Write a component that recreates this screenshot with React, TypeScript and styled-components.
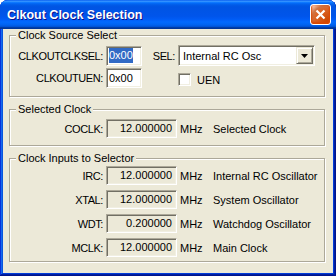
import { Fragment } from "react";
import styled, { createGlobalStyle } from "styled-components";

const GlobalStyle = createGlobalStyle`
  html, body {
    margin: 0;
    padding: 0;
    background: #fff;
  }
  body {
    font-family: "Liberation Sans", Arial, sans-serif;
    font-size: 11px;
    color: #000;
  }
`;

const Window = styled.div`
  width: 336px;
  height: 276px;
  box-sizing: border-box;
  display: flex;
  flex-direction: column;
  background: #0842d4;
  border-radius: 8px 8px 0 0;
  overflow: hidden;
  box-shadow: inset -1px -1px #00138c, inset 1px 1px #0831d9, inset -2px -2px #001ea0,
    inset 2px 2px #166aee, inset -3px -3px #003bda, inset 3px 3px #0855dd;
`;

const TitleBar = styled.div`
  height: 29px;
  flex: none;
  display: flex;
  align-items: center;
  justify-content: space-between;
  padding: 0 5px 0 7px;
  background: linear-gradient(
    to bottom,
    #0058ee 0%,
    #3a93ff 4%,
    #288eff 6%,
    #127dff 8%,
    #036ffc 10%,
    #0262ee 14%,
    #0057e5 20%,
    #0054e3 24%,
    #0055eb 56%,
    #005bf5 66%,
    #026afe 76%,
    #0062ef 86%,
    #0052d6 92%,
    #0040ab 94%,
    #003092 100%
  );
`;

const Title = styled.span`
  color: #fff;
  font-weight: bold;
  font-size: 12.5px;
  text-shadow: 1px 1px #0f1089;
`;

const CloseButton = styled.div`
  width: 21px;
  height: 21px;
  box-sizing: border-box;
  border: 1px solid #fff;
  border-radius: 3px;
  display: flex;
  align-items: center;
  justify-content: center;
  background: radial-gradient(circle at 85% 85%, #cc4600 0%, #dc6527 55%, #cd7546 70%, #ffccb2 90%, #fff 100%);
  box-shadow: inset 0 -1px 2px 1px #da4600;
`;

const Frame = styled.div`
  flex: 1;
  display: flex;
  padding: 0 3px 3px;
`;

const Client = styled.div`
  flex: 1;
  background: #ece9d8;
  padding: 6px 8px 10px 6px;
  display: flex;
  flex-direction: column;
  gap: 12px;
`;

const Group = styled.div<{ $pad: string }>`
  position: relative;
  border: 1px solid #aca899;
  box-shadow: 1px 1px 0 #fff, inset 1px 1px 0 #fff;
  padding: ${(p) => p.$pad};
`;

const Legend = styled.span`
  position: absolute;
  top: -7px;
  left: 6px;
  padding: 0 2px;
  line-height: 13px;
  background: #ece9d8;
`;

const Grid = styled.div<{ $cols: string; $rows: string; $gap: number }>`
  display: grid;
  grid-template-columns: ${(p) => p.$cols};
  grid-template-rows: ${(p) => p.$rows};
  column-gap: 3px;
  row-gap: ${(p) => p.$gap}px;
  align-items: center;
`;

const Label = styled.span`
  text-align: right;
  white-space: nowrap;
  letter-spacing: -0.4px;
`;

const Sunken = styled.div`
  box-sizing: border-box;
  border: 1px solid;
  border-color: #aca899 #fff #fff #aca899;
  box-shadow: inset 1px 1px #716f64, inset -1px -1px #f1efe2;
`;

const Edit = styled(Sunken)`
  height: 20px;
  background: #fff;
  padding: 0 2px;
  display: flex;
  align-items: center;
`;

const Selected = styled.span`
  background: #316ac5;
  color: #fff;
  line-height: 15px;
`;

const ReadOnly = styled(Sunken)`
  height: 19px;
  background: #ece9d8;
  text-align: right;
  padding-right: 4px;
  line-height: 17px;
`;

const Combo = styled(Sunken)`
  height: 21px;
  background: #fff;
  display: flex;
  align-items: center;
  justify-content: space-between;
  padding: 2px 1px 2px 4px;
`;

const DropButton = styled.div`
  width: 17px;
  height: 17px;
  box-sizing: border-box;
  background: #ece9d8;
  border: 1px solid;
  border-color: #ece9d8 #716f64 #716f64 #ece9d8;
  box-shadow: inset 1px 1px #fff, inset -1px -1px #aca899;
  display: flex;
  align-items: center;
  justify-content: center;
`;

const CheckRow = styled.label`
  display: flex;
  align-items: center;
  gap: 6px;
  padding-top: 3px;
`;

const CheckBox = styled(Sunken)`
  width: 13px;
  height: 13px;
  background: #fff;
`;

const Unit = styled.span``;

const Desc = styled.span`
  white-space: nowrap;
`;

const clockInputs = [
  { name: "IRC:", value: "12.000000", desc: "Internal RC Oscillator" },
  { name: "XTAL:", value: "12.000000", desc: "System Oscillator" },
  { name: "WDT:", value: "0.200000", desc: "Watchdog Oscillator" },
  { name: "MCLK:", value: "12.000000", desc: "Main Clock" },
];

function App() {
  return (
    <>
      <GlobalStyle />
      <Window>
        <TitleBar>
          <Title>Clkout Clock Selection</Title>
          <CloseButton>
            <svg width="11" height="11" viewBox="0 0 11 11">
              <path d="M1.5 1.5L9.5 9.5M9.5 1.5L1.5 9.5" stroke="#fff" strokeWidth="2.2" />
            </svg>
          </CloseButton>
        </TitleBar>
        <Frame>
          <Client>
            <Group $pad="9px 0 8px">
              <Legend>Clock Source Select</Legend>
              <Grid $cols="93px 36px 30px 137px" $rows="21px 20px" $gap={2}>
                <Label>CLKOUTCLKSEL:</Label>
                <Edit>
                  <Selected>0x00</Selected>
                </Edit>
                <Label>SEL:</Label>
                <Combo>
                  <span>Internal RC Osc</span>
                  <DropButton>
                    <svg width="7" height="4" viewBox="0 0 7 4">
                      <path d="M0 0H7L3.5 4Z" fill="#000" />
                    </svg>
                  </DropButton>
                </Combo>
                <Label>CLKOUTUEN:</Label>
                <Edit>0x00</Edit>
                <span />
                <CheckRow>
                  <CheckBox />
                  UEN
                </CheckRow>
              </Grid>
            </Group>

            <Group $pad="9px 0 7px">
              <Legend>Selected Clock</Legend>
              <Grid $cols="93px 71px 30px auto" $rows="19px" $gap={0}>
                <Label>COCLK:</Label>
                <ReadOnly>12.000000</ReadOnly>
                <Unit>MHz</Unit>
                <Desc>Selected Clock</Desc>
              </Grid>
            </Group>

            <Group $pad="7px 0 4px">
              <Legend>Clock Inputs to Selector</Legend>
              <Grid $cols="93px 71px 30px auto" $rows="repeat(4, 19px)" $gap={5}>
                {clockInputs.map((c) => (
                  <Fragment key={c.name}>
                    <Label>{c.name}</Label>
                    <ReadOnly>{c.value}</ReadOnly>
                    <Unit>MHz</Unit>
                    <Desc>{c.desc}</Desc>
                  </Fragment>
                ))}
              </Grid>
            </Group>
          </Client>
        </Frame>
      </Window>
    </>
  );
}

export default App;
